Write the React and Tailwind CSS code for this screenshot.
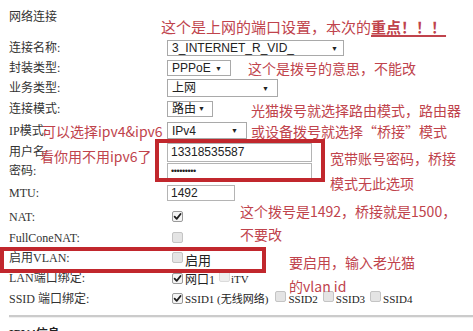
import React from 'react';

const cjk = "font-['Noto_Sans_CJK_SC',sans-serif]";
const mixed = "font-['Liberation_Serif','Noto_Sans_CJK_SC',serif]";
const arial = "font-['Liberation_Sans','Noto_Sans_CJK_SC',sans-serif]";

function Select({ className, children }) {
    return (
        <div className={`flex items-center justify-between bg-white border border-[#a9a9a9] pl-[4px] text-[12px] text-[#222] ${arial} ${className}`}>
            <span className="leading-none">{children}</span>
            <span className="text-[7px] leading-none text-[#222]">▼</span>
        </div>
    );
}

function Input({ className, children }) {
    return (
        <div className={`flex items-center bg-white border border-[#b4b4b4] pl-[3px] text-[12px] text-[#222] ${arial} ${className}`}>
            {children}
        </div>
    );
}

function Box({ checked }) {
    return (
        <span
            className={`inline-flex shrink-0 w-[11px] h-[11px] items-center justify-center rounded-[2px] border ${
                checked ? 'border-[#9a9a9a] bg-[#f4f4f4]' : 'border-[#c4c4c4] bg-[#e4e4e4]'
            }`}
        >
            {checked && (
                <svg width="9" height="9" viewBox="0 0 10 10">
                    <path d="M1.8 5.2 L4.1 7.6 L8.4 2.2" fill="none" stroke="#1e1e1e" strokeWidth="2" strokeLinecap="round" strokeLinejoin="round" />
                </svg>
            )}
        </span>
    );
}

const rows = [
    { h: 'h-[20px]', label: '连接名称:', control: <Select className="w-[177px] h-[16px] pr-[5px]">3_INTERNET_R_VID_</Select> },
    { h: 'h-[20px]', label: '封装类型:', control: <Select className="w-[64px] h-[16px] pr-[8px]">PPPoE</Select> },
    { h: 'h-[20px]', label: '业务类型:', control: <Select className="w-[111px] h-[18px] pr-[8px]">上网</Select> },
    { h: 'h-[21px]', label: '连接模式:', control: <Select className="w-[46px] h-[16px] pr-[7px]">路由</Select> },
    { h: 'h-[23px]', label: 'IP模式:', control: <Select className="w-[80px] h-[17px] pr-[8px]">IPv4</Select> },
    { h: 'h-[20px]', label: '用户名:', control: <Input className="w-[145px] h-[19px]">13318535587</Input> },
    {
        h: 'h-[18px]',
        label: '密码:',
        control: <Input className="w-[145px] h-[17px]"><span className="text-[9px] tracking-[-0.4px] leading-none">•••••••••</span></Input>,
    },
    { h: 'h-[25px]', label: 'MTU:', control: <Input className="w-[68px] h-[16px]">1492</Input> },
    { h: 'h-[23px]', label: 'NAT:', control: <span className="pl-[5px] flex"><Box checked /></span> },
    { h: 'h-[19px]', label: 'FullConeNAT:', control: <span className="pl-[5px] flex"><Box /></span> },
    {
        h: 'h-[21px]',
        label: '启用VLAN:',
        control: (
            <span className="pl-[5px] flex items-center gap-[2px]">
                <Box />
                <span className={`text-[13px] text-[#222] mt-[5px] ${cjk}`}>启用</span>
            </span>
        ),
    },
    {
        h: 'h-[20px]',
        label: 'LAN端口绑定:',
        control: (
            <span className={`pl-[5px] flex items-center text-[12px] text-[#222] ${mixed}`}>
                <Box checked />
                <span className="ml-[2px] mt-[3px]">网口1</span>
                <span className="ml-[4px] opacity-60"><Box /></span>
                <span className="ml-[1px] mt-[3px] text-[11px]">iTV</span>
            </span>
        ),
    },
    {
        h: 'h-[21px]',
        label: 'SSID 端口绑定:',
        control: (
            <span className={`pl-[5px] flex items-center text-[11px] text-[#222] ${mixed}`}>
                <Box checked />
                <span className="ml-[2px] mt-[2px]">SSID1 (无线网络)</span>
                <span className="ml-[7px]"><Box /></span>
                <span className="ml-[2px] mt-[2px]">SSID2</span>
                <span className="ml-[5px]"><Box /></span>
                <span className="ml-[2px] mt-[2px]">SSID3</span>
                <span className="ml-[5px]"><Box /></span>
                <span className="ml-[2px] mt-[2px]">SSID4</span>
            </span>
        ),
    },
];

const notes = [
    { pos: 'left-[248px] top-[61px]', text: '这个是拨号的意思，不能改' },
    { pos: 'left-[251px] top-[103px]', text: '光猫拨号就选择路由模式，路由器' },
    { pos: 'left-[251px] top-[124px]', text: '或设备拨号就选择“桥接”模式' },
    { pos: 'left-[330px] top-[151px]', text: '宽带账号密码，桥接' },
    { pos: 'left-[330px] top-[176px]', text: '模式无此选项' },
    { pos: 'left-[240px] top-[204px]', text: '这个拨号是1492，桥接就是1500，' },
    { pos: 'left-[240px] top-[227px]', text: '不要改' },
    { pos: 'left-[289px] top-[255px]', text: '要启用，输入老光猫' },
    { pos: 'left-[289px] top-[279px]', text: '的vlan id' },
    { pos: 'left-[42px] top-[124px]', text: '可以选择ipv4&ipv6' },
    { pos: 'left-[40px] top-[149px]', text: '看你用不用ipv6了' },
];

export default function App() {
    return (
        <div className="relative w-[473px] h-[331px] overflow-hidden bg-white">
            <div className="pl-[9px] pt-[8px]">
                <div className={`h-[30px] text-[12px] leading-[16px] text-[#333] ${cjk}`}>网络连接</div>
                {rows.map((r, i) => (
                    <div key={i} className={`flex items-center ${r.h}`}>
                        <div className={`w-[158px] shrink-0 text-[12px] text-[#333] ${mixed}`}>{r.label}</div>
                        {r.control}
                    </div>
                ))}
                <div className="mt-[6px] border-t-2 border-[#cbcbcb] shadow-[0_1px_1px_#eee]" />
                <div className={`mt-[8px] text-[12px] font-bold text-[#222] ${mixed}`}>IPV4信息:</div>
            </div>

            {/* red frames */}
            <div className="absolute left-[155px] top-[139px] w-[170px] h-[43px] border-[4px] border-[#c1272d]" />
            <div className="absolute left-[0px] top-[247px] w-[266px] h-[26px] border-[4px] border-[#c1272d]" />

            {/* annotations */}
            <div className={`absolute left-[161px] top-[19px] text-[15px] leading-[15px] text-[#c0434c] whitespace-nowrap ${cjk}`}>
                这个是上网的端口设置，本次的
                <span className="font-bold underline decoration-[1.5px] underline-offset-[2px]">重点！！！</span>
            </div>
            {notes.map((n, i) => (
                <div key={i} className={`absolute ${n.pos} text-[14px] leading-[14px] text-[#c0434c] whitespace-nowrap ${cjk}`}>
                    {n.text}
                </div>
            ))}
        </div>
    );
}
